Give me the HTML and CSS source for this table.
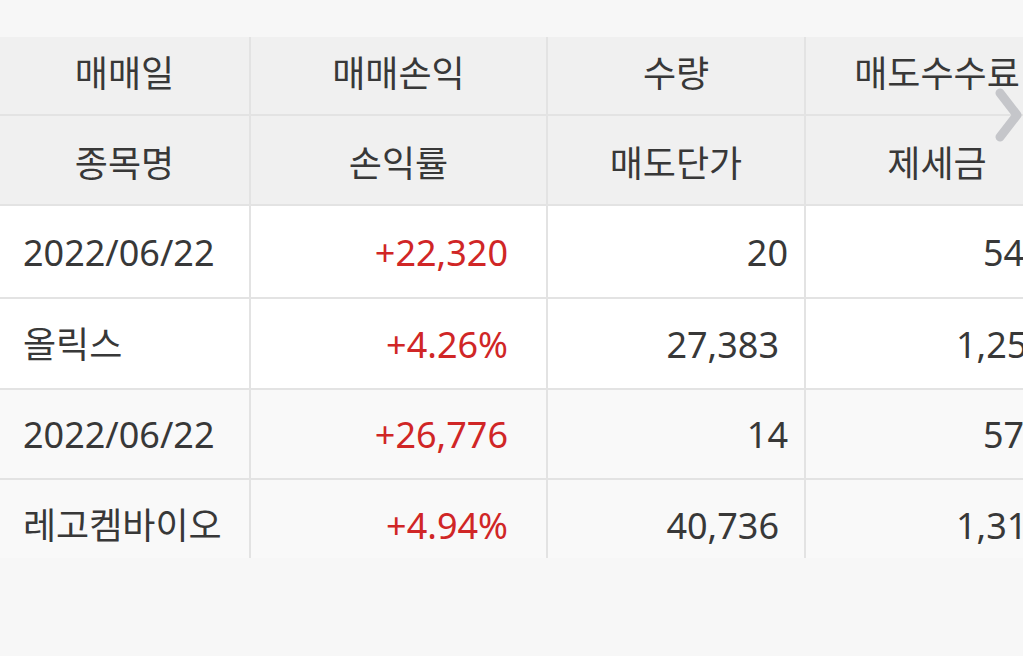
FILE: index.html
```html
<!DOCTYPE html>
<html lang="ko">
<head>
<meta charset="utf-8">
<title>매매내역</title>
<link rel="stylesheet" href="styles.css">
</head>
<body>
<div class="page">
  <div class="topbar"></div>
  <div class="viewport">
    <div class="grid">
      <div class="cell head h1">매매일</div>
      <div class="cell head h1">매매손익</div>
      <div class="cell head h1">수량</div>
      <div class="cell head h1">매도수수료</div>

      <div class="cell head h2">종목명</div>
      <div class="cell head h2">손익률</div>
      <div class="cell head h2">매도단가</div>
      <div class="cell head h2">제세금</div>

      <div class="cell white r1 left">2022/06/22</div>
      <div class="cell white r1 right up">+22,320</div>
      <div class="cell white r1 right pad-a">20</div>
      <div class="cell white r1 clip pos-a">54</div>

      <div class="cell white r2 left">올릭스</div>
      <div class="cell white r2 right up">+4.26%</div>
      <div class="cell white r2 right pad-b">27,383</div>
      <div class="cell white r2 clip pos-b">1,25</div>

      <div class="cell grey r3 left">2022/06/22</div>
      <div class="cell grey r3 right up">+26,776</div>
      <div class="cell grey r3 right pad-a">14</div>
      <div class="cell grey r3 clip pos-a">57</div>

      <div class="cell grey r4 left">레고켐바이오</div>
      <div class="cell grey r4 right up">+4.94%</div>
      <div class="cell grey r4 right pad-b">40,736</div>
      <div class="cell grey r4 clip pos-b">1,31</div>
    </div>
  </div>
  <svg class="chevron" width="40" height="64" viewBox="0 0 40 64" aria-hidden="true">
    <polyline points="8,7 25,29 8,51" fill="none" stroke="#c5c6ca" stroke-width="9" stroke-linecap="round" stroke-linejoin="round"/>
  </svg>
</div>
</body>
</html>
```

FILE: styles.css
```css
* { box-sizing: border-box; }

html, body {
  margin: 0;
  padding: 0;
  width: 1023px;
  height: 656px;
  overflow: hidden;
  background: #f7f7f7;
}

.page {
  position: relative;
  width: 1023px;
  height: 656px;
  font-family: "Noto Sans", "Noto Sans CJK KR", sans-serif;
  font-size: 36px;
  color: #383838;
}

.topbar {
  height: 37px;
  background: #f7f7f7;
}

.viewport {
  height: 521px;
  overflow: hidden;
}

.grid {
  margin-top: -11px;
  width: 1068px;
  display: grid;
  grid-template-columns: 249px 295px 256px 262px;
  grid-template-rows: 88px 88px 91px 89px 88px 89px;
  gap: 2px;
  background: #e3e3e3;
}

.cell {
  display: flex;
  align-items: center;
  white-space: nowrap;
  line-height: 1;
  padding-top: 2px;
}

.head {
  background: #f0f0f0;
  justify-content: center;
  font-family: "Noto Sans CJK KR", sans-serif;
  font-size: 36px;
}

.h1 { padding-top: 1px; }

.white { background: #ffffff; }
.grey { background: #f9f9f9; }

.left {
  justify-content: flex-start;
  padding-left: 23px;
}

.right { justify-content: flex-end; }

.up {
  color: #d02626;
  padding-right: 38px;
}

.pad-a { padding-right: 16px; }
.pad-b { padding-right: 25px; }

.clip { justify-content: flex-start; }
.pos-a { padding-left: 177px; }
.pos-b { padding-left: 150px; }

.r2, .r4 { font-family: "Noto Sans", "Noto Sans CJK KR", sans-serif; }

.chevron {
  position: absolute;
  left: 992px;
  top: 86px;
}
```
